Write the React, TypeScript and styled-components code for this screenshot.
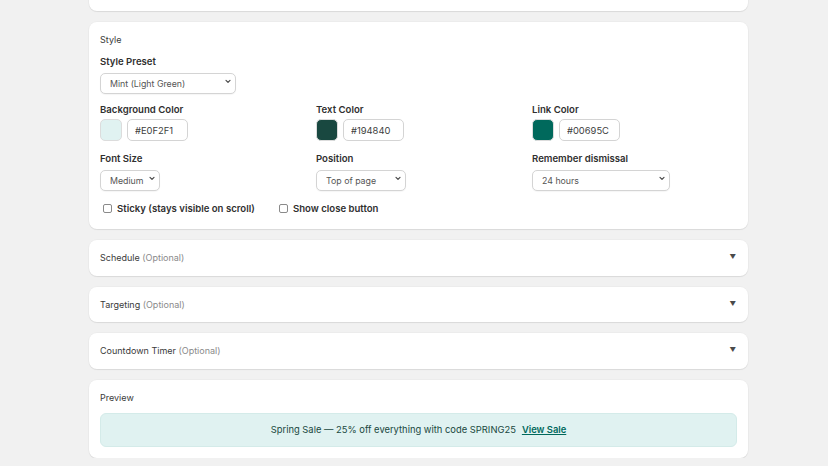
import React from "react";
import styled, { createGlobalStyle } from "styled-components";

const Global = createGlobalStyle`
  html, body { margin: 0; padding: 0; background: #f1f1f1; }
  body { font-family: Inter, "Noto Sans", sans-serif; color: #303030; overflow: hidden; }
  * { box-sizing: border-box; }
`;

const Page = styled.div`
  width: 659px;
  margin-left: 89px;
  display: flex;
  flex-direction: column;
  gap: 11px;
  margin-top: -29px;
`;

const Card = styled.section<{ $h?: number; $pb?: number }>`
  background: #fff;
  border-radius: 8px;
  box-shadow: 0 1px 1px rgba(0, 0, 0, 0.08), 0 0 0 1px rgba(0, 0, 0, 0.02);
  padding: 11px 11px ${(p) => p.$pb ?? 11}px;
  ${(p) => (p.$h ? `height: ${p.$h}px;` : "")}
`;

const CardTitle = styled.div`
  font-size: 9px;
  line-height: 13px;
  color: #3a3a3a;
`;

const Muted = styled.span`
  color: #8a8a8a;
`;

const Fields = styled.div`
  display: flex;
  flex-direction: column;
  gap: 11px;
  margin-top: 9px;
`;

const Grid = styled.div`
  display: grid;
  grid-template-columns: repeat(3, 1fr);
  column-gap: 11px;
`;

const Field = styled.div`
  display: flex;
  flex-direction: column;
  align-items: flex-start;
  gap: 3px;
`;

const Label = styled.label`
  font-size: 9.6px;
  line-height: 13px;
  font-weight: 600;
  color: #303030;
`;

const SelectWrap = styled.div<{ $w: number }>`
  position: relative;
  width: ${(p) => p.$w}px;
  height: 21px;
`;

const Select = styled.select`
  appearance: none;
  width: 100%;
  height: 100%;
  border: 1px solid #d4d4d4;
  border-radius: 5px;
  background: #fff;
  font-family: inherit;
  font-size: 8.8px;
  color: #555;
  padding: 0 0 0 9px;
  box-shadow: 0 1px 1px rgba(0, 0, 0, 0.04);
  outline: none;
`;

const Chevron = styled.svg`
  position: absolute;
  right: 5px;
  top: 8px;
  width: 6px;
  height: 5px;
  pointer-events: none;
`;

const ColorRow = styled.div`
  display: flex;
  align-items: center;
  gap: 5px;
`;

const Swatch = styled.div<{ $c: string }>`
  width: 22px;
  height: 22px;
  border-radius: 5px;
  border: 1px solid #dcdcdc;
  background: ${(p) => p.$c};
`;

const HexInput = styled.input`
  width: 61px;
  height: 22px;
  border: 1px solid #d4d4d4;
  border-radius: 5px;
  font-family: inherit;
  font-size: 9.4px;
  color: #404040;
  padding: 0 0 0 7px;
  outline: none;
`;

const CheckRow = styled.div`
  display: flex;
  align-items: center;
  gap: 24px;
  padding-left: 3px;
  margin-top: 2px;
`;

const CheckLabel = styled.label`
  display: flex;
  align-items: center;
  gap: 5px;
  font-size: 9.6px;
  line-height: 13px;
  font-weight: 600;
  color: #303030;
`;

const Box = styled.input`
  appearance: none;
  margin: 0;
  width: 9px;
  height: 9px;
  border: 1px solid #8a8a8a;
  border-radius: 2px;
  background: #fff;
`;

const CollapseHead = styled.div`
  display: flex;
  align-items: center;
  justify-content: space-between;
  height: 13px;
  font-size: 9px;
  line-height: 13px;
  color: #3a3a3a;
`;

const Caret = styled.span`
  font-size: 6.5px;
  line-height: 13px;
  color: #4a4a4a;
  margin-right: 1px;
`;

const Banner = styled.div`
  margin-top: 9px;
  height: 34px;
  border-radius: 6px;
  background: #e0f2f1;
  border: 1px solid #d4ebe9;
  display: flex;
  align-items: center;
  justify-content: center;
  gap: 6px;
  font-size: 9.4px;
  color: #194840;
`;

const BannerLink = styled.a`
  color: #00695c;
  font-weight: 600;
  text-decoration: underline;
`;

function Dropdown({ w, value }: { w: number; value: string }) {
  return (
    <SelectWrap $w={w}>
      <Select defaultValue={value}>
        <option>{value}</option>
      </Select>
      <Chevron viewBox="0 0 6 5">
        <path d="M1 1.3l2 2 2-2" fill="none" stroke="#4a4a4a" strokeWidth="1.2" strokeLinecap="round" strokeLinejoin="round" />
      </Chevron>
    </SelectWrap>
  );
}

function ColorField({ label, color, hex }: { label: string; color: string; hex: string }) {
  return (
    <Field>
      <Label>{label}</Label>
      <ColorRow>
        <Swatch $c={color} />
        <HexInput defaultValue={hex} />
      </ColorRow>
    </Field>
  );
}

function Collapsible({ title }: { title: string }) {
  return (
    <Card $h={35.5}>
      <CollapseHead>
        <span>
          {title} <Muted>(Optional)</Muted>
        </span>
        <Caret>▼</Caret>
      </CollapseHead>
    </Card>
  );
}

export default function App() {
  return (
    <>
      <Global />
      <Page>
        <Card $h={40} />
        <Card $pb={14}>
          <CardTitle>Style</CardTitle>
          <Fields>
            <Field>
              <Label>Style Preset</Label>
              <Dropdown w={136} value="Mint (Light Green)" />
            </Field>
            <Grid>
              <ColorField label="Background Color" color="#E0F2F1" hex="#E0F2F1" />
              <ColorField label="Text Color" color="#194840" hex="#194840" />
              <ColorField label="Link Color" color="#00695C" hex="#00695C" />
            </Grid>
            <Grid>
              <Field>
                <Label>Font Size</Label>
                <Dropdown w={60} value="Medium" />
              </Field>
              <Field>
                <Label>Position</Label>
                <Dropdown w={90} value="Top of page" />
              </Field>
              <Field>
                <Label>Remember dismissal</Label>
                <Dropdown w={138} value="24 hours" />
              </Field>
            </Grid>
            <CheckRow>
              <CheckLabel>
                <Box type="checkbox" />
                Sticky (stays visible on scroll)
              </CheckLabel>
              <CheckLabel>
                <Box type="checkbox" />
                Show close button
              </CheckLabel>
            </CheckRow>
          </Fields>
        </Card>
        <Collapsible title="Schedule" />
        <Collapsible title="Targeting" />
        <Collapsible title="Countdown Timer" />
        <Card>
          <CardTitle>Preview</CardTitle>
          <Banner>
            <span>Spring Sale — 25% off everything with code SPRING25</span>
            <BannerLink href="#">View Sale</BannerLink>
          </Banner>
        </Card>
      </Page>
    </>
  );
}
